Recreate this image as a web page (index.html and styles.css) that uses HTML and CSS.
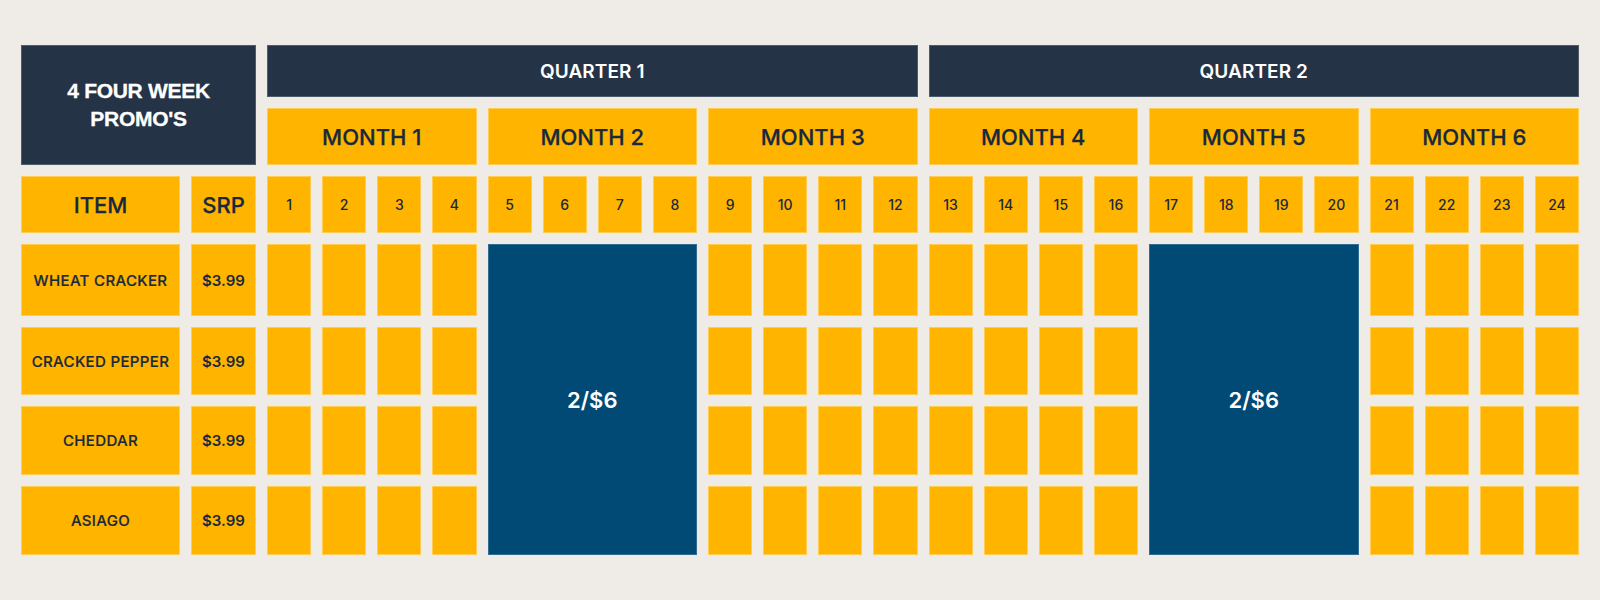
FILE: index.html
```html
<!DOCTYPE html>
<html lang="en">
<head>
<meta charset="utf-8">
<title>4 Four Week Promo's</title>
<link rel="stylesheet" href="styles.css">
</head>
<body>
<div class="board">
  <div class="cell title">4 FOUR WEEK<br>PROMO'S</div>
  <div class="cell quarter">QUARTER 1</div>
  <div class="cell quarter">QUARTER 2</div>

  <div class="cell month">MONTH 1</div>
  <div class="cell month">MONTH 2</div>
  <div class="cell month">MONTH 3</div>
  <div class="cell month">MONTH 4</div>
  <div class="cell month">MONTH 5</div>
  <div class="cell month">MONTH 6</div>

  <div class="cell colhead">ITEM</div>
  <div class="cell colhead">SRP</div>
  <div class="cell week">1</div><div class="cell week">2</div><div class="cell week">3</div><div class="cell week">4</div>
  <div class="cell week">5</div><div class="cell week">6</div><div class="cell week">7</div><div class="cell week">8</div>
  <div class="cell week">9</div><div class="cell week">10</div><div class="cell week">11</div><div class="cell week">12</div>
  <div class="cell week">13</div><div class="cell week">14</div><div class="cell week">15</div><div class="cell week">16</div>
  <div class="cell week">17</div><div class="cell week">18</div><div class="cell week">19</div><div class="cell week">20</div>
  <div class="cell week">21</div><div class="cell week">22</div><div class="cell week">23</div><div class="cell week">24</div>

  <div class="cell promo promo-a">2/$6</div>
  <div class="cell promo promo-b">2/$6</div>

  <div class="cell item">WHEAT CRACKER</div>
  <div class="cell price">$3.99</div>
  <div class="cell slot"></div><div class="cell slot"></div><div class="cell slot"></div><div class="cell slot"></div>
  <div class="cell slot"></div><div class="cell slot"></div><div class="cell slot"></div><div class="cell slot"></div>
  <div class="cell slot"></div><div class="cell slot"></div><div class="cell slot"></div><div class="cell slot"></div>
  <div class="cell slot"></div><div class="cell slot"></div><div class="cell slot"></div><div class="cell slot"></div>

  <div class="cell item">CRACKED PEPPER</div>
  <div class="cell price">$3.99</div>
  <div class="cell slot"></div><div class="cell slot"></div><div class="cell slot"></div><div class="cell slot"></div>
  <div class="cell slot"></div><div class="cell slot"></div><div class="cell slot"></div><div class="cell slot"></div>
  <div class="cell slot"></div><div class="cell slot"></div><div class="cell slot"></div><div class="cell slot"></div>
  <div class="cell slot"></div><div class="cell slot"></div><div class="cell slot"></div><div class="cell slot"></div>

  <div class="cell item">CHEDDAR</div>
  <div class="cell price">$3.99</div>
  <div class="cell slot"></div><div class="cell slot"></div><div class="cell slot"></div><div class="cell slot"></div>
  <div class="cell slot"></div><div class="cell slot"></div><div class="cell slot"></div><div class="cell slot"></div>
  <div class="cell slot"></div><div class="cell slot"></div><div class="cell slot"></div><div class="cell slot"></div>
  <div class="cell slot"></div><div class="cell slot"></div><div class="cell slot"></div><div class="cell slot"></div>

  <div class="cell item">ASIAGO</div>
  <div class="cell price">$3.99</div>
  <div class="cell slot"></div><div class="cell slot"></div><div class="cell slot"></div><div class="cell slot"></div>
  <div class="cell slot"></div><div class="cell slot"></div><div class="cell slot"></div><div class="cell slot"></div>
  <div class="cell slot"></div><div class="cell slot"></div><div class="cell slot"></div><div class="cell slot"></div>
  <div class="cell slot"></div><div class="cell slot"></div><div class="cell slot"></div><div class="cell slot"></div>
</div>
</body>
</html>
```
FILE: styles.css
```css
html, body {
  margin: 0;
  padding: 0;
  background: #efece7;
}

body {
  font-family: Inter, "Noto Sans", "Liberation Sans", sans-serif;
  color: #18293f;
}

.board {
  display: grid;
  grid-template-columns: 159px 65px repeat(24, 1fr);
  grid-template-rows: 52px 57px 57px 72px 68px 69px 69px;
  column-gap: 11px;
  row-gap: 11px;
  width: 1558px;
  padding: 45px 0 0 21px;
}

.cell {
  display: flex;
  align-items: center;
  justify-content: center;
  text-align: center;
  background: #ffb400;
  box-shadow: inset 0 0 0 1px rgba(255, 235, 190, 0.45);
}

.title {
  grid-column: span 2;
  grid-row: span 2;
  background: #243446;
  box-shadow: inset 0 0 0 1px rgba(200, 210, 220, 0.25);
  color: #ffffff;
  font-family: "Liberation Sans", Arial, sans-serif;
  font-weight: 700;
  font-size: 21px;
  line-height: 28.5px;
  letter-spacing: -0.3px;
  -webkit-text-stroke: 0.3px #ffffff;
}

.quarter {
  grid-column: span 12;
  background: #243446;
  box-shadow: inset 0 0 0 1px rgba(200, 210, 220, 0.25);
  color: #ffffff;
  font-weight: 600;
  font-size: 19px;
  letter-spacing: 0.1px;
}

.month {
  grid-column: span 4;
  font-weight: 500;
  font-size: 22px;
  -webkit-text-stroke: 0.25px #18293f;
}

.colhead {
  font-weight: 500;
  font-size: 22px;
  -webkit-text-stroke: 0.25px #18293f;
}

.week {
  font-weight: 500;
  font-size: 14px;
}

.item {
  font-weight: 500;
  font-size: 15px;
  letter-spacing: 0.35px;
  -webkit-text-stroke: 0.2px #18293f;
}

.price {
  font-weight: 600;
  font-size: 15px;
}

.promo {
  grid-row: 4 / span 4;
  background: #004a75;
  box-shadow: inset 0 0 0 1px rgba(200, 215, 230, 0.25);
  color: #ffffff;
  font-weight: 600;
  font-size: 22px;
}

.promo-a {
  grid-column: 7 / span 4;
}

.promo-b {
  grid-column: 19 / span 4;
}
```
